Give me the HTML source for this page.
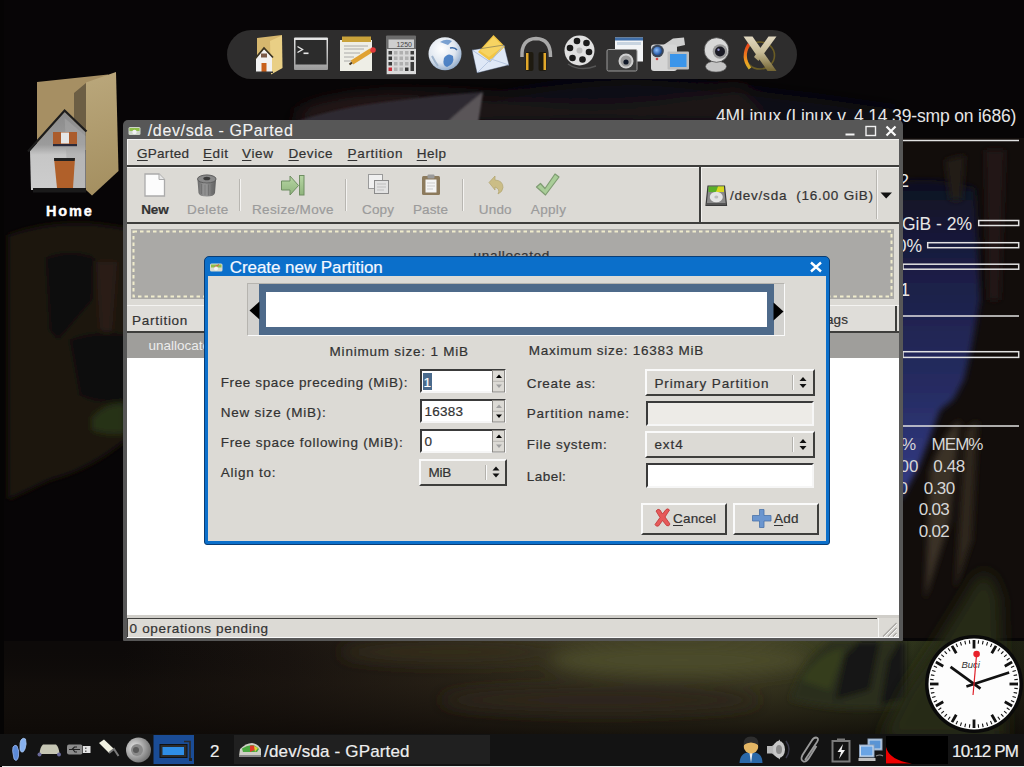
<!DOCTYPE html>
<html><head><meta charset="utf-8">
<style>
*{box-sizing:border-box;margin:0;padding:0}
html,body{width:1024px;height:767px;overflow:hidden;background:#0b0908}
body{position:relative;font-family:"Liberation Sans",sans-serif}
.a{position:absolute}
.t{position:absolute;white-space:nowrap;line-height:1;color:#323232;-webkit-text-stroke:0.2px currentColor}
.u{text-decoration:underline;text-decoration-thickness:1px;text-underline-offset:2px}
svg{position:absolute;overflow:visible}
</style></head><body>
<!--WALL-->
<svg style="left:0;top:0" width="1024" height="767">
<defs>
<filter id="b20" x="-50%" y="-50%" width="200%" height="200%"><feGaussianBlur stdDeviation="18"/></filter>
<filter id="b10" x="-50%" y="-50%" width="200%" height="200%"><feGaussianBlur stdDeviation="8"/></filter>
<filter id="b4" x="-50%" y="-50%" width="200%" height="200%"><feGaussianBlur stdDeviation="3"/></filter>
<filter id="b2" x="-50%" y="-50%" width="200%" height="200%"><feGaussianBlur stdDeviation="1.2"/></filter>
<linearGradient id="sky" gradientUnits="userSpaceOnUse" x1="0" y1="180" x2="0" y2="500"><stop offset="0" stop-color="#0f1020"/><stop offset="0.25" stop-color="#1a1d42"/><stop offset="0.65" stop-color="#262c62"/><stop offset="1" stop-color="#353d88"/></linearGradient>
<linearGradient id="gh" gradientUnits="userSpaceOnUse" x1="0" y1="0" x2="1024" y2="0"><stop offset="0.12" stop-color="#0d0a09"/><stop offset="0.28" stop-color="#1a1410"/><stop offset="0.42" stop-color="#2a2318"/><stop offset="0.58" stop-color="#403d25"/><stop offset="0.74" stop-color="#464528"/><stop offset="0.86" stop-color="#333a1e"/><stop offset="1" stop-color="#1e2012"/></linearGradient>
<linearGradient id="gv" gradientUnits="userSpaceOnUse" x1="0" y1="640" x2="0" y2="736"><stop offset="0" stop-color="#0a0806" stop-opacity="0"/><stop offset="0.45" stop-color="#1a140e" stop-opacity="0.35"/><stop offset="1" stop-color="#0e0a07" stop-opacity="0.85"/></linearGradient>
</defs>
<rect width="1024" height="767" fill="#070506"/>
<g filter="url(#b10)">
<path d="M480 100 Q600 70 700 85 Q800 95 900 110 L900 125 L480 125Z" fill="#0c0c14"/>
<path d="M290 118 Q380 78 520 100 Q640 112 740 85 L770 122 L290 125Z" fill="#1f1517"/>
<path d="M300 110 Q360 88 420 100 L415 118 Q360 105 305 122Z" fill="#2a1a1a"/>

</g>
<g filter="url(#b2)">
<path d="M290 124 Q330 108 400 100 Q440 95 482 92 L478 124Z" fill="#2e2a32"/>
<path d="M445 124 Q462 108 483 92 L478 124Z" fill="#5a5458"/>
</g>
<g filter="url(#b4)">
<path d="M8 235 Q60 215 126 228 L126 440 Q90 470 50 480 L8 500Z" fill="#1a1310"/>
<path d="M46 258 Q70 248 95 258 L92 300 Q75 320 58 340 L50 330Z" fill="#0a0708"/>
<path d="M96 262 L117 262 L112 330 Q105 336 100 328Z" fill="#2a1f17"/>
<path d="M70 340 Q95 330 126 335 L126 400 Q100 405 80 395Z" fill="#0b0808"/>
<path d="M92 418 Q108 400 126 404 L126 433 Q108 436 92 430Z" fill="#283016"/>
</g>
<!-- ground -->
<rect x="0" y="641" width="1024" height="99" fill="url(#gh)"/>
<rect x="0" y="641" width="1024" height="99" fill="url(#gv)"/>
<g filter="url(#b10)">
<ellipse cx="450" cy="652" rx="110" ry="10" fill="#342e1e"/>
<ellipse cx="680" cy="660" rx="130" ry="16" fill="#4c4b2c"/>
<ellipse cx="600" cy="700" rx="160" ry="12" fill="#2e261a"/>
</g>
<g filter="url(#b4)">
<path d="M790 700 Q800 670 815 655 L830 641 L905 641 L905 705 Q850 715 790 700Z" fill="#2a2e1a"/>
<path d="M835 700 L845 655 L860 641 L880 641 L870 690Z" fill="#141412"/>
<path d="M880 705 L888 660 L900 641 L905 641 L905 700Z" fill="#151513"/>
<path d="M800 680 Q820 650 845 648 L830 690Z" fill="#353c1e"/>
</g>
<!-- right side --><!-- right side -->
<rect x="900" y="138" width="124" height="500" fill="#120d0b"/>
<g filter="url(#b4)">
<path d="M898 182 Q935 176 975 188 L980 300 L971 350 L964 380 L953 400 L940 410 L929 440 L917 470 L903 495 L898 500Z" fill="url(#sky)"/>
</g>
<g filter="url(#b4)">
<path d="M930 470 Q945 430 960 420 L950 520 L925 600 Z" fill="#3a3226"/>
<path d="M965 430 L978 420 L972 540 L955 590Z" fill="#2e271e"/>
<path d="M985 150 L1005 150 L1000 300 L988 300Z" fill="#221816"/>
<path d="M945 160 L965 155 L962 200 L950 200Z" fill="#231a18"/>
</g>
<g filter="url(#b10)">
<path d="M880 740 L905 690 Q940 640 975 580 Q990 560 1000 600 L1005 740Z" fill="#262c17"/>
</g>
<rect x="0" y="0" width="4" height="767" fill="#050404"/>
</svg>
<svg style="left:0;top:0" width="1024" height="767">
<g stroke="#e2e2e2" fill="none">
<path d="M903 140.5H1019" stroke-width="1.6"/>
<rect x="978.7" y="220.5" width="40" height="5" stroke-width="1.5"/>
<rect x="927.7" y="242.7" width="91" height="5" stroke-width="1.5"/>
<rect x="903" y="264.2" width="115.7" height="5" stroke-width="1.5"/>
<path d="M903 316H1019" stroke-width="1.6"/>
<rect x="903" y="351.7" width="115.7" height="5.7" stroke-width="1.5"/>
<path d="M903 426H1019" stroke-width="1.6"/>
</g>
</svg>

<div class=t style='left:715.9px;top:107.7px;font-size:17.5px;letter-spacing:-0.15px;color:#e6e6e6;-webkit-text-stroke:0'>4MLinux (Linux v. 4.14.39-smp on i686)</div>
<div class=t style='left:931.5px;top:436.1px;font-size:17px;letter-spacing:-0.93px;color:#d6d6d6;-webkit-text-stroke:0'>MEM%</div>
<div class=t style='left:933.3px;top:458.0px;font-size:17px;letter-spacing:-0.36px;color:#d6d6d6;-webkit-text-stroke:0'>0.48</div>
<div class=t style='left:923.8px;top:479.9px;font-size:17px;letter-spacing:-0.56px;color:#d6d6d6;-webkit-text-stroke:0'>0.30</div>
<div class=t style='left:918.7px;top:501.3px;font-size:17px;letter-spacing:-0.70px;color:#d6d6d6;-webkit-text-stroke:0'>0.03</div>
<div class=t style='left:918.7px;top:522.8px;font-size:17px;letter-spacing:-0.70px;color:#d6d6d6;-webkit-text-stroke:0'>0.02</div>
<div class=t style='left:45.9px;top:203.9px;font-size:14.5px;letter-spacing:1.90px;color:#fff;font-weight:bold;-webkit-text-stroke:0.4px #fff'>Home</div>
<div class=t style='right:115.0px;top:173.2px;font-size:17.5px;letter-spacing:0px;color:#e6e6e6;-webkit-text-stroke:0'>Uptime: 0h 12m 2</div>
<div class=t style='right:52.0px;top:216.2px;font-size:17.5px;letter-spacing:0px;color:#e6e6e6;-webkit-text-stroke:0'>16.00GiB - 2%</div>
<div class=t style='right:102.0px;top:237.8px;font-size:17.5px;letter-spacing:0px;color:#e6e6e6;-webkit-text-stroke:0'>RAM: 10%</div>
<div class=t style='right:114.0px;top:281.6px;font-size:17.5px;letter-spacing:0px;color:#e6e6e6;-webkit-text-stroke:0'>Processes: 121</div>
<div class=t style='right:108.0px;top:436.1px;font-size:17px;letter-spacing:0px;color:#d6d6d6;-webkit-text-stroke:0'>CPU%</div>
<div class=t style='right:105.5px;top:458.0px;font-size:17px;letter-spacing:0px;color:#d6d6d6;-webkit-text-stroke:0'>0.00</div>
<div class=t style='right:116.0px;top:479.9px;font-size:17px;letter-spacing:0px;color:#d6d6d6;-webkit-text-stroke:0'>0.00</div>
<!--DOCK-->
<div class="a" style="left:227px;top:30px;width:570px;height:49px;border-radius:25px;background:#2e2d2d"></div>

<svg style="left:0;top:0" width="1024" height="230">
<defs>
<linearGradient id="silv" x1="0" y1="0" x2="0" y2="1"><stop offset="0" stop-color="#e8e8e8"/><stop offset="1" stop-color="#9a9a9a"/></linearGradient>
<linearGradient id="gold" x1="0" y1="0" x2="1" y2="0"><stop offset="0" stop-color="#e2c77c"/><stop offset="1" stop-color="#c9a858"/></linearGradient>
<radialGradient id="globe" cx="0.4" cy="0.35" r="0.7"><stop offset="0" stop-color="#ffffff"/><stop offset="0.6" stop-color="#dfe6ef"/><stop offset="1" stop-color="#8aa6c8"/></radialGradient>
<radialGradient id="lens" cx="0.4" cy="0.4" r="0.6"><stop offset="0" stop-color="#8fc0ff"/><stop offset="1" stop-color="#1a4c9a"/></radialGradient>
<linearGradient id="tan" x1="0" y1="0" x2="1" y2="1"><stop offset="0" stop-color="#b8a577"/><stop offset="1" stop-color="#9d8a5c"/></linearGradient>
</defs>
<!-- desktop Home icon -->
<linearGradient id="tan2" gradientUnits="userSpaceOnUse" x1="86" y1="80" x2="118" y2="190"><stop offset="0" stop-color="#b9a67a"/><stop offset="1" stop-color="#a48f60"/></linearGradient>
<path d="M37 82 L108 74.5 L108 150 L37 150Z" fill="#a68f63"/>
<path d="M74 93 L86 83 L86 150 L74 150Z" fill="#6c5e44"/>
<path d="M86 82.5 L116 72 L118.5 171 L92 195.5 L86 190Z" fill="url(#tan2)"/>
<linearGradient id="hw" gradientUnits="userSpaceOnUse" x1="0" y1="112" x2="0" y2="190"><stop offset="0" stop-color="#8a8a8a"/><stop offset="0.42" stop-color="#9c9c9c"/><stop offset="0.55" stop-color="#c6c6c6"/><stop offset="1" stop-color="#cdcdcd"/></linearGradient>
<path d="M30 151 L64.6 112 L85.5 132 L85.5 190 L31 190Z" fill="url(#hw)"/>
<path d="M64.6 118 L85.5 136 L85.5 190 L68 190Z" fill="#a8a8a8" opacity="0.55"/>
<path d="M28 151.5 L64.6 110.5 L86.5 131.5" fill="none" stroke="#1c1c1c" stroke-width="2.2"/>
<rect x="53" y="132" width="24" height="12.5" fill="#ab5c2c"/>
<rect x="61" y="132.5" width="8" height="11" fill="#e6e6e6"/>
<rect x="53" y="144" width="24" height="2.2" fill="#2a2a3a"/>
<path d="M54 158 H75 L73 188 H57Z" fill="#b0602a"/>
<path d="M54 158 H75 L74.6 161 H54.2Z" fill="#222"/>
<rect x="33" y="188" width="53" height="4.5" fill="#1a1a1a"/>
<!-- dock: home folder -->
<path d="M257 38 L282 35 L282 68 L257 72Z" fill="#d6b76e"/>
<path d="M270 41 L282 35.5 L282.5 68 L271 74.5Z" fill="#e9cf85"/>
<path d="M256 72 L256 58 L264 49 L272 57 L272 72Z" fill="#f2f2f2"/>
<path d="M254.5 59.5 L264 48 L273 57.5" fill="none" stroke="#3a3322" stroke-width="1.8"/>
<rect x="261.5" y="63" width="5" height="9" fill="#c8601c"/>
<rect x="261" y="53.5" width="6" height="4" fill="#7a5a48"/>
<rect x="255" y="71.5" width="18" height="1.5" fill="#333"/>

<!-- terminal -->
<rect x="294" y="37.5" width="34" height="32.5" rx="1" fill="url(#silv)"/>
<rect x="295.5" y="40" width="31" height="24.5" fill="#2c2c2c"/>
<path d="M297.5 46.5 L302.5 49.5 L297.5 52.5" fill="none" stroke="#e8e8e8" stroke-width="1.4"/>
<rect x="303.5" y="52.5" width="5" height="1.6" fill="#e8e8e8"/>

<!-- notepad -->
<rect x="340" y="40" width="32" height="31" fill="#eeeee6"/>
<rect x="342" y="36.5" width="29" height="5.5" fill="#c9a23a"/>
<g stroke="#9a9a9a" stroke-width="0.8"><path d="M344 46H368M344 49H364M344 53H360M344 57H354M344 61H352"/></g>
<path d="M352 62.5 L371 50.5" stroke="#e0a232" stroke-width="4.5" stroke-linecap="butt"/>
<path d="M352 62.5 L349.5 64.5" stroke="#4a3a20" stroke-width="2"/>
<circle cx="373" cy="50" r="2.8" fill="#e23a3a"/>

<!-- calculator -->
<rect x="386" y="35.5" width="30" height="39" rx="1" fill="#6b6b6b"/>
<rect x="388.5" y="39.5" width="25.5" height="8.5" fill="#cfcfcf"/>
<text x="412" y="47" font-size="7" font-family="Liberation Sans" fill="#444" text-anchor="end">1250</text>
<rect x="387" y="49" width="29" height="25" fill="#d9d9d9"/>
<g fill="#3a3a3a"><rect x="388.5" y="51" width="3.5" height="3.5"/><rect x="388.5" y="56.5" width="3.5" height="3.5"/><rect x="388.5" y="62" width="3.5" height="3.5"/><rect x="410.5" y="51" width="3.5" height="3.5"/><rect x="410.5" y="56.5" width="3.5" height="3.5"/><rect x="410.5" y="62" width="3.5" height="9"/><rect x="405" y="67.5" width="3.5" height="3.5"/></g>
<g fill="#b0b0b0"><rect x="394" y="51" width="3.5" height="3.5"/><rect x="399.5" y="51" width="3.5" height="3.5"/><rect x="405" y="51" width="3.5" height="3.5"/><rect x="394" y="56.5" width="3.5" height="3.5"/><rect x="399.5" y="56.5" width="3.5" height="3.5"/><rect x="405" y="56.5" width="3.5" height="3.5"/><rect x="394" y="62" width="3.5" height="3.5"/><rect x="399.5" y="62" width="3.5" height="3.5"/><rect x="405" y="62" width="3.5" height="3.5"/><rect x="394" y="67.5" width="3.5" height="3.5"/><rect x="399.5" y="67.5" width="3.5" height="3.5"/></g>
<rect x="388.5" y="67.5" width="3.5" height="3.5" fill="#c8303a"/>

<!-- globe -->
<circle cx="445" cy="53.8" r="16.5" fill="url(#globe)"/>
<path d="M444 58 Q448 52 453 56 Q455 64 447 67 Q442 66 444 58Z" fill="#3f78c0" opacity="0.9"/>
<path d="M440 42 Q446 38 452 41 L448 45Z" fill="#4a7fc0" opacity="0.7"/>
<path d="M450 48 Q455 47 457 50" stroke="#3a6aa8" stroke-width="1.5" fill="none"/>
<path d="M432 56 Q435 62 438 66" stroke="#a0b4cc" stroke-width="2" fill="none"/>

<!-- envelope -->
<path d="M472 50 L504 45 L509 65 L477 73Z" fill="#dfe8f6"/>
<path d="M478 52 L493.5 35 L505 46.5 L490 61Z" fill="#f2c544"/>
<path d="M480 51 L493.5 37 L503 46.5 L489 57Z" fill="#f7d462"/>
<path d="M472 50 L490 62 L504 45" fill="none" stroke="#aebfdc" stroke-width="1"/>
<path d="M477 73 L491 59 L509 65" fill="none" stroke="#b8c8e2" stroke-width="1"/>
<path d="M472 50 L504 45 L509 65 L477 73Z" fill="none" stroke="#27344e" stroke-width="0.8" opacity="0.5"/>
<!-- headphones -->
<path d="M522 57 Q521 39 536 38.5 Q551 39 550.5 57" fill="none" stroke="#a8a8a8" stroke-width="3.5"/>
<rect x="525.5" y="52" width="8" height="19" rx="2" fill="#1e1a10"/>
<rect x="538.5" y="52" width="8" height="19" rx="2" fill="#1e1a10"/>
<rect x="526" y="53" width="2.5" height="17" fill="#e2a82a"/>
<rect x="543.5" y="53" width="2.5" height="17" fill="#e2a82a"/>

<!-- film reel -->
<path d="M568 64 Q580 72 596 66" fill="none" stroke="#555" stroke-width="1.5"/>
<circle cx="579.5" cy="50.5" r="15" fill="#e0e0e0"/>
<g fill="#1a1a1a"><circle cx="577" cy="41" r="3.3"/><circle cx="586.5" cy="43" r="3.3"/><circle cx="589" cy="52" r="3.3"/><circle cx="582.5" cy="59.5" r="3.3"/><circle cx="572.5" cy="58" r="3.3"/><circle cx="570" cy="48" r="3.3"/></g>
<circle cx="579.5" cy="50.5" r="3" fill="#bbb"/>

<!-- camera + photo -->
<rect x="615" y="37.5" width="28" height="24" fill="#f2f4f6"/>
<rect x="615" y="37.5" width="28" height="3" fill="#3f6ea8"/>
<rect x="617" y="42" width="24" height="3" fill="#c8d4e0"/>
<rect x="607" y="49.5" width="30" height="21.5" rx="1.5" fill="#3c3c3c" stroke="#9a9a9a" stroke-width="1"/>
<circle cx="626" cy="61" r="7.5" fill="#cfcfcf"/>
<circle cx="626" cy="61" r="5.5" fill="#9a9a9a"/>
<circle cx="626" cy="62" r="2.6" fill="#101828"/>

<!-- camcorder -->
<path d="M662 46 L673 38.5 L684 37.5 L685 45 L676 47Z" fill="#cfcfcf"/>
<rect x="651" y="44.5" width="26" height="26.5" rx="3" fill="#d6d6d6"/>
<circle cx="657.5" cy="51" r="6.3" fill="#3a4658"/>
<circle cx="657.5" cy="51" r="4.3" fill="url(#lens)"/>
<circle cx="657" cy="59" r="1.3" fill="#d04848"/>
<rect x="667.5" y="51.5" width="21.5" height="18" rx="1" fill="#bdbdbd"/>
<rect x="670" y="54" width="16.5" height="13" fill="#3b95ea"/>
<!-- webcam -->
<ellipse cx="716" cy="66.5" rx="10.5" ry="5.5" fill="#c4c4c4" stroke="#555" stroke-width="0.6"/>
<circle cx="716.5" cy="50" r="12.3" fill="#d8d8d8" stroke="#4a4a4a" stroke-width="0.8"/>
<circle cx="720" cy="51.5" r="7.3" fill="#9a9a9a"/>
<circle cx="720" cy="51.5" r="5" fill="#1a1a24"/>
<circle cx="718.5" cy="49.8" r="1.2" fill="#9090c8"/>
<!-- X logo -->
<linearGradient id="xg" gradientUnits="userSpaceOnUse" x1="0" y1="36" x2="0" y2="72"><stop offset="0" stop-color="#e2d9c2"/><stop offset="0.45" stop-color="#c8bc98"/><stop offset="1" stop-color="#6e5f2c"/></linearGradient>
<linearGradient id="og" gradientUnits="userSpaceOnUse" x1="0" y1="44" x2="0" y2="70"><stop offset="0" stop-color="#e8401a"/><stop offset="0.7" stop-color="#f0a020"/><stop offset="1" stop-color="#c8b030"/></linearGradient>
<ellipse cx="760" cy="55.5" rx="14.5" ry="13.5" fill="none" stroke="#6a5c24" stroke-width="1.6"/>
<path d="M749 44 Q741 57 750 68.5" fill="none" stroke="url(#og)" stroke-width="3.2"/>
<path d="M743.5 36.5 L752.5 36.5 L776.5 71 L767.5 71Z" fill="url(#xg)"/>
<path d="M776.5 36.5 L768.5 36.5 L754 57 L758.5 61Z" fill="url(#xg)"/>
</svg>

<!--WINDOW-->
<div class="a" style="left:123px;top:120px;width:780px;height:521px;background:#575757;border-radius:5px 5px 1px 1px"></div>
<div class="a" style="left:127px;top:139px;width:772px;height:499px;background:#dcdad5"></div>
<!-- menubar highlight -->
<div class="a" style="left:127px;top:139px;width:772px;height:1px;background:#f4f3f1"></div>
<div class="a" style="left:127px;top:139px;width:1px;height:26px;background:#f4f3f1"></div>
<div class="a" style="left:127px;top:165px;width:772px;height:2px;background:#3e3e3c"></div>
<div class="a" style="left:127px;top:167px;width:772px;height:1px;background:#f4f3f1"></div>
<!-- toolbar bottom -->
<div class="a" style="left:127px;top:222px;width:772px;height:2px;background:#3e3e3c"></div>
<div class="a" style="left:699px;top:167px;width:2px;height:56px;background:#3e3e3c"></div>
<div class="a" style="left:701px;top:168px;width:1px;height:54px;background:#f4f3f1"></div>
<!-- toolbar separators -->
<div class="a" style="left:239px;top:179px;width:1px;height:32px;background:#b8b6b1"></div>
<div class="a" style="left:240px;top:179px;width:1px;height:32px;background:#f4f3f1"></div>
<div class="a" style="left:345px;top:179px;width:1px;height:32px;background:#b8b6b1"></div>
<div class="a" style="left:346px;top:179px;width:1px;height:32px;background:#f4f3f1"></div>
<div class="a" style="left:462px;top:179px;width:1px;height:32px;background:#b8b6b1"></div>
<div class="a" style="left:463px;top:179px;width:1px;height:32px;background:#f4f3f1"></div>
<!-- combo separator -->
<div class="a" style="left:876px;top:170px;width:1px;height:49px;background:#b8b6b1"></div>
<div class="a" style="left:877px;top:170px;width:1px;height:49px;background:#f4f3f1"></div>
<svg style="left:880px;top:192px" width="13" height="7"><path d="M0.5 0.5H12L6.2 6.5Z" fill="#111"/></svg>
<!-- partition map -->
<div class="a" style="left:131px;top:229px;width:763px;height:70px;background:#aaa9a6"></div>
<svg style="left:131px;top:229px" width="763" height="70"><rect x="2.5" y="2.5" width="758" height="65" fill="none" stroke="#efeccc" stroke-width="2" stroke-dasharray="3.5 3"/></svg>
<!-- list header -->
<div class="a" style="left:127px;top:305px;width:772px;height:1px;background:#f4f3f1"></div>
<div class="a" style="left:127px;top:306px;width:772px;height:25px;background:#dfddd9"></div>
<div class="a" style="left:127px;top:331px;width:772px;height:2px;background:#3e3e3c"></div>
<div class="a" style="left:895px;top:306px;width:2px;height:26px;background:#3e3e3c"></div>
<!-- row -->
<div class="a" style="left:127px;top:333px;width:772px;height:25px;background:#9f9e9b"></div>
<!-- list white -->
<div class="a" style="left:127px;top:358px;width:772px;height:257px;background:#ffffff"></div>
<!-- status -->
<div class="a" style="left:127px;top:615px;width:772px;height:3px;background:#d0cec9"></div>
<div class="a" style="left:127px;top:618px;width:750px;height:1px;background:#3e3e3c"></div>
<div class="a" style="left:127px;top:618px;width:1px;height:19px;background:#3e3e3c"></div>
<div class="a" style="left:127px;top:637px;width:772px;height:1px;background:#f8f8f8"></div>
<div class="a" style="left:878px;top:618px;width:1px;height:19px;background:#f6f6f4"></div>
<svg style="left:880px;top:620px" width="18" height="18"><path d="M16.5 3L3 16.5M16.5 8L8 16.5M16.5 13L13 16.5" stroke="#a9a7a2" stroke-width="1.3"/><path d="M17 4L4 17M17 9L9 17M17 14L14 17" stroke="#fafafa" stroke-width="0.8"/></svg>
<!-- title buttons -->
<svg style="left:844px;top:125px" width="54" height="13">
<path d="M1.5 9.5H10.5" stroke="#f4f4f4" stroke-width="2"/>
<rect x="22" y="1.5" width="9.5" height="9" fill="none" stroke="#f0f0f0" stroke-width="1.4"/>
<path d="M42.5 1.5L51.5 10.5M51.5 1.5L42.5 10.5" stroke="#fafafa" stroke-width="2.2"/>
</svg>

<svg style="left:0;top:0" width="1024" height="560">
<defs>
<linearGradient id="grn" x1="0" y1="0" x2="0" y2="1"><stop offset="0" stop-color="#b7d6a4"/><stop offset="1" stop-color="#8fb47c"/></linearGradient>
<linearGradient id="trash" x1="0" y1="0" x2="1" y2="0"><stop offset="0" stop-color="#6a6a6a"/><stop offset="0.4" stop-color="#9a9a9a"/><stop offset="1" stop-color="#5e5e5e"/></linearGradient>
</defs>
<!-- window title icon -->
<rect x="128.5" y="127" width="12" height="8" rx="1.5" fill="#cfd6c8"/>
<rect x="129.5" y="128" width="10" height="3" fill="#8fbf4a"/>
<circle cx="134.5" cy="132" r="2.2" fill="#f2f2f2"/>
<!-- New -->
<path d="M145 174 H159 L164.5 179.5 V196 H145Z" fill="#fcfcfc" stroke="#ababab" stroke-width="1.3"/>
<path d="M159 174 V179.5 H164.5" fill="#e8e8e8" stroke="#ababab" stroke-width="1"/>
<!-- Delete -->
<path d="M197.5 180 Q197 175 206.8 174.5 Q216.5 175 216 180 L215 193 Q214 196.5 206.8 196.5 Q199.5 196.5 198.5 193Z" fill="url(#trash)"/>
<ellipse cx="206.8" cy="179" rx="9.3" ry="4" fill="#8a8a8a" stroke="#555" stroke-width="0.8"/>
<ellipse cx="206.8" cy="178.5" rx="3.5" ry="1.8" fill="#3a3a3a"/>
<g stroke="#6a6a6a" stroke-width="0.7"><path d="M201.5 184V194M205 184.5V195.5M208.5 184.5V195.5M212 184V194"/></g>
<!-- Resize/Move -->
<path d="M281.5 181 H290 V176 L298.5 185.5 L290 195 V190 H281.5Z" fill="url(#grn)" stroke="#6f8e62" stroke-width="1"/>
<rect x="299.5" y="175.5" width="4.5" height="19.5" fill="url(#grn)" stroke="#6f8e62" stroke-width="1"/>
<!-- Copy -->
<rect x="368.5" y="174.5" width="14" height="14" fill="#f0f0f0" stroke="#9a9a9a" stroke-width="1"/>
<rect x="374.5" y="180.5" width="14" height="13" fill="#e2e2e2" stroke="#8a8a8a" stroke-width="1"/>
<g stroke="#b0b0b0" stroke-width="0.7"><path d="M377 184H386M377 187H386M377 190H384"/></g>
<!-- Paste -->
<rect x="422" y="176" width="18" height="19" rx="1.5" fill="#8c7a5c"/>
<rect x="425.5" y="179.5" width="11" height="13" fill="#f4f4f4"/>
<rect x="427.5" y="174.5" width="7" height="4" rx="1" fill="#9a9a9a"/>
<g stroke="#bbb" stroke-width="0.7"><path d="M427 183H435M427 186H435M427 189H433"/></g>
<!-- Undo -->
<path d="M489 182.5 L495 176 V180 Q503 180.5 503 187.5 Q502.5 192 498 194 Q500.5 189 495 187 V190Z" fill="#cbbd86" stroke="#b0a46e" stroke-width="0.7"/>
<!-- Apply -->
<path d="M536.5 187 L540.5 183.5 L545 188.5 L555 174 L559 177 L545.5 195Z" fill="#a9cd98" stroke="#7f9c72" stroke-width="1.2" stroke-linejoin="round"/>
<!-- HDD in combo -->
<path d="M708 186 H724.5 L726.5 205.5 H706Z" fill="#8a8a8a" stroke="#3a3a3a" stroke-width="1.2"/>
<rect x="708.5" y="186.5" width="15.5" height="5.5" fill="#5ab02a"/>
<path d="M718 186.5 L724 186.5 L724 192 L716 192Z" fill="#d8d820"/>
<ellipse cx="716.3" cy="197" rx="6.5" ry="5.3" fill="#e4e4e4"/>
<ellipse cx="716.3" cy="197" rx="2" ry="1.5" fill="#bbb"/>
<rect x="707" y="203" width="19" height="2" fill="#555"/>
</svg>

<div class=t style='left:147.8px;top:123.0px;font-size:16px;letter-spacing:0.63px;color:#f2f2f2;-webkit-text-stroke:0.1px #f2f2f2'>/dev/sda - GParted</div>
<div class=t style='left:137.0px;top:147.4px;font-size:13.5px;letter-spacing:0.28px;color:#323232;'><span class=u>G</span>Parted</div>
<div class=t style='left:203.0px;top:147.4px;font-size:13.5px;letter-spacing:0.57px;color:#323232;'><span class=u>E</span>dit</div>
<div class=t style='left:242.0px;top:147.4px;font-size:13.5px;letter-spacing:0.66px;color:#323232;'><span class=u>V</span>iew</div>
<div class=t style='left:288.4px;top:147.4px;font-size:13.5px;letter-spacing:0.59px;color:#323232;'><span class=u>D</span>evice</div>
<div class=t style='left:347.6px;top:147.4px;font-size:13.5px;letter-spacing:0.66px;color:#323232;'><span class=u>P</span>artition</div>
<div class=t style='left:416.7px;top:147.4px;font-size:13.5px;letter-spacing:0.51px;color:#323232;'><span class=u>H</span>elp</div>
<div class=t style='left:141.2px;top:202.6px;font-size:13.5px;letter-spacing:-0.13px;color:#333;font-weight:bold'>New</div>
<div class=t style='left:187.0px;top:202.6px;font-size:13.5px;letter-spacing:0.47px;color:#9b9b9b;'>Delete</div>
<div class=t style='left:252.0px;top:202.6px;font-size:13.5px;letter-spacing:0.36px;color:#9b9b9b;'>Resize/Move</div>
<div class=t style='left:362.0px;top:202.6px;font-size:13.5px;letter-spacing:0.16px;color:#9b9b9b;'>Copy</div>
<div class=t style='left:413.0px;top:202.6px;font-size:13.5px;letter-spacing:0.12px;color:#9b9b9b;'>Paste</div>
<div class=t style='left:478.8px;top:202.6px;font-size:13.5px;letter-spacing:0.17px;color:#9b9b9b;'>Undo</div>
<div class=t style='left:530.8px;top:202.6px;font-size:13.5px;letter-spacing:0.35px;color:#9b9b9b;'>Apply</div>
<div class=t style='left:730.0px;top:188.6px;font-size:13.5px;letter-spacing:0.77px;color:#333;'>/dev/sda&nbsp; (16.00 GiB)</div>
<div class=t style='left:132.0px;top:313.7px;font-size:13.5px;letter-spacing:0.73px;color:#323232;'>Partition</div>
<div class=t style='left:148.5px;top:338.9px;font-size:13.5px;letter-spacing:0.00px;color:#ececec;-webkit-text-stroke:0'>unallocated</div>
<div class=t style='left:826.0px;top:313.1px;font-size:13.5px;letter-spacing:0.11px;color:#323232;'>ags</div>
<div class=t style='left:473.6px;top:249.2px;font-size:13.5px;letter-spacing:0.67px;color:#333;'>unallocated</div>
<div class=t style='left:129.6px;top:621.6px;font-size:13.5px;letter-spacing:0.65px;color:#323232;'>0 operations pending</div>
<!--DIALOG-->
<div class="a" style="left:204px;top:256px;width:626px;height:289px;background:#0b6fca;border:1px solid #0a3d74;border-radius:5px 5px 3px 3px"></div>
<div class="a" style="left:208px;top:276px;width:618px;height:265px;background:#dcdad5"></div>
<svg style="left:809px;top:261px" width="14" height="12"><path d="M2 1.5L12 10.5M12 1.5L2 10.5" stroke="#fff" stroke-width="2.4"/></svg>
<!-- partition widget -->
<div class="a" style="left:247px;top:283px;width:538px;height:53px;background:#d2d1ce;border:1px solid;border-color:#b6b4af #fafafa #fafafa #b6b4af"></div>
<div class="a" style="left:259px;top:284px;width:515px;height:51px;background:#4e6a8a"></div>
<div class="a" style="left:266px;top:292px;width:501px;height:35px;background:#fff"></div>
<svg style="left:249px;top:301px" width="11" height="19"><path d="M0.5 9.5L10.5 0.5V18.5Z" fill="#000"/></svg>
<svg style="left:773px;top:302px" width="11" height="19"><path d="M0.5 0.5L10.5 9.5L0.5 18.5Z" fill="#000"/></svg>
<!-- spin boxes -->
<div class="a" style="left:420px;top:369px;width:86px;height:24px;background:#fff;border:2px solid;border-color:#3a3a3a #f6f6f6 #f6f6f6 #3a3a3a"></div>
<div class="a" style="left:420px;top:399px;width:86px;height:24px;background:#fff;border:2px solid;border-color:#3a3a3a #f6f6f6 #f6f6f6 #3a3a3a"></div>
<div class="a" style="left:420px;top:429px;width:86px;height:24px;background:#fff;border:2px solid;border-color:#3a3a3a #f6f6f6 #f6f6f6 #3a3a3a"></div>
<!--SPINBTNS-->
<!-- align combo -->
<div class="a" style="left:419px;top:459px;width:88px;height:27px;background:#dcdad5;border:2px solid;border-color:#fafafa #3e3e3c #3e3e3c #fafafa"></div>
<div class="a" style="left:485px;top:465px;width:1px;height:15px;background:#b3b1ac"></div>
<div class="a" style="left:486px;top:465px;width:1px;height:15px;background:#fafafa"></div>
<!-- right combos -->
<div class="a" style="left:645px;top:369px;width:170px;height:27px;background:#dcdad5;border:2px solid;border-color:#fafafa #3e3e3c #3e3e3c #fafafa"></div>
<div class="a" style="left:792px;top:375px;width:1px;height:15px;background:#b3b1ac"></div>
<div class="a" style="left:793px;top:375px;width:1px;height:15px;background:#fafafa"></div>
<div class="a" style="left:646px;top:401px;width:168px;height:25px;background:#edebe7;border:2px solid;border-color:#3a3a3a #f6f6f6 #f6f6f6 #3a3a3a"></div>
<div class="a" style="left:645px;top:431px;width:170px;height:27px;background:#dcdad5;border:2px solid;border-color:#fafafa #3e3e3c #3e3e3c #fafafa"></div>
<div class="a" style="left:792px;top:437px;width:1px;height:15px;background:#b3b1ac"></div>
<div class="a" style="left:793px;top:437px;width:1px;height:15px;background:#fafafa"></div>
<div class="a" style="left:646px;top:463px;width:168px;height:25px;background:#fff;border:2px solid;border-color:#3a3a3a #f6f6f6 #f6f6f6 #3a3a3a"></div>
<!--COMBOARROWS-->
<!-- buttons -->
<div class="a" style="left:641px;top:503px;width:86px;height:32px;background:#dcdad5;border:2px solid;border-color:#fafafa #3e3e3c #3e3e3c #fafafa"></div>
<div class="a" style="left:733px;top:503px;width:86px;height:32px;background:#dcdad5;border:2px solid;border-color:#fafafa #3e3e3c #3e3e3c #fafafa"></div>
<!-- selected 1 -->
<div class="a" style="left:423px;top:373px;width:9px;height:17px;background:#4a6a8c"></div>
<div class="t" style="left:423.5px;top:376px;font-size:13.5px;color:#fff">1</div>

<svg style="left:0;top:0" width="1024" height="560">
<!-- dialog title icon -->
<rect x="210" y="263.5" width="12.5" height="8" rx="1.5" fill="#d8dcd0"/>
<rect x="211" y="264.5" width="10.5" height="3" fill="#8fbf4a"/>
<path d="M214 267.5 L219 264.5" stroke="#e05050" stroke-width="1"/>
<circle cx="216" cy="268.5" r="2" fill="#f4f4f4"/>
<!-- spin buttons -->
<g>
<rect x="492.5" y="370.5" width="12" height="21.5" fill="#dcdad5" stroke="#8a8884" stroke-width="1"/>
<rect x="492.5" y="400.5" width="12" height="21.5" fill="#dcdad5" stroke="#8a8884" stroke-width="1"/>
<rect x="492.5" y="430.5" width="12" height="21.5" fill="#dcdad5" stroke="#8a8884" stroke-width="1"/>
<path d="M493 381.3H504M493 411.3H504M493 441.3H504" stroke="#b8b6b1" stroke-width="1"/>
<path d="M496 378H502L499 374.5Z" fill="#000"/>
<path d="M496 384.5H502L499 388Z" fill="#a0a0a0"/>
<path d="M496 408H502L499 404.5Z" fill="#a0a0a0"/>
<path d="M496 414.5H502L499 418Z" fill="#000"/>
<path d="M496 438H502L499 434.5Z" fill="#000"/>
<path d="M496 444.5H502L499 448Z" fill="#a0a0a0"/>
</g>
<!-- combo double arrows -->
<g fill="#111">
<path d="M492.5 470.5H499.5L496 466.5Z"/><path d="M492.5 473.5H499.5L496 477.5Z"/>
<path d="M799.5 381H806.5L803 377Z"/><path d="M799.5 384H806.5L803 388Z"/>
<path d="M799.5 443H806.5L803 439Z"/><path d="M799.5 446H806.5L803 450Z"/>
</g>
<!-- cancel X -->
<path d="M656 511 Q658 508 660 510 L662.5 514 L666 509.5 Q668 508 669.5 510 L665 517 L670 524 Q669 527 666.5 525.5 L662.5 520.5 L658.5 526 Q656 527 655 524.5 L660 517.5Z" fill="#e65a5a" stroke="#c03434" stroke-width="0.8"/>
<!-- add plus -->
<path d="M759.5 509.5 H764 V515.5 H771 V521 H764 V527.5 H759.5 V521 H752.5 V515.5 H759.5Z" fill="#6b96cf" stroke="#4a72a8" stroke-width="0.8"/>
</svg>

<div class=t style='left:229.7px;top:259.0px;font-size:17px;letter-spacing:-0.05px;color:#f4f8ff;'>Create new Partition</div>
<div class=t style='left:329.6px;top:344.7px;font-size:13.5px;letter-spacing:0.77px;color:#323232;'>Minimum size: 1 MiB</div>
<div class=t style='left:528.7px;top:344.4px;font-size:13.5px;letter-spacing:0.74px;color:#323232;'>Maximum size: 16383 MiB</div>
<div class=t style='left:220.7px;top:375.9px;font-size:13.5px;letter-spacing:0.63px;color:#323232;'>Free space preceding (MiB):</div>
<div class=t style='left:220.7px;top:405.5px;font-size:13.5px;letter-spacing:0.76px;color:#323232;'>New size (MiB):</div>
<div class=t style='left:220.7px;top:435.5px;font-size:13.5px;letter-spacing:0.71px;color:#323232;'>Free space following (MiB):</div>
<div class=t style='left:220.7px;top:466.2px;font-size:13.5px;letter-spacing:0.76px;color:#323232;'>Align to:</div>
<div class=t style='left:526.7px;top:376.5px;font-size:13.5px;letter-spacing:0.71px;color:#323232;'>Create as:</div>
<div class=t style='left:526.7px;top:407.4px;font-size:13.5px;letter-spacing:0.83px;color:#323232;'>Partition name:</div>
<div class=t style='left:526.7px;top:438.3px;font-size:13.5px;letter-spacing:0.74px;color:#323232;'>File system:</div>
<div class=t style='left:526.7px;top:469.5px;font-size:13.5px;letter-spacing:0.48px;color:#323232;'>Label:</div>
<div class=t style='left:424.4px;top:405.4px;font-size:13.5px;letter-spacing:0.26px;color:#323232;'>16383</div>
<div class=t style='left:424.4px;top:435.0px;font-size:13.5px;letter-spacing:0.00px;color:#323232;'>0</div>
<div class=t style='left:428.4px;top:466.0px;font-size:13.5px;letter-spacing:-0.22px;color:#323232;'>MiB</div>
<div class=t style='left:654.4px;top:377.1px;font-size:13.5px;letter-spacing:0.89px;color:#323232;'>Primary Partition</div>
<div class=t style='left:654.4px;top:438.3px;font-size:13.5px;letter-spacing:0.92px;color:#323232;'>ext4</div>
<div class=t style='left:673.0px;top:512.2px;font-size:13.5px;letter-spacing:0.19px;color:#323232;'><span class=u>C</span>ancel</div>
<div class=t style='left:774.0px;top:512.2px;font-size:13.5px;letter-spacing:0.18px;color:#323232;'><span class=u>A</span>dd</div>
<!--ICONS-->

<svg style="left:0;top:0" width="1024" height="767">
<circle cx="974" cy="684" r="49" fill="#0a0a0a"/>
<circle cx="974" cy="684" r="45.5" fill="#fdfdfd"/>
<path d="M974.00 648.50L974.00 640.00" stroke="#111" stroke-width="2.8"/>
<path d="M978.23 643.72L978.60 640.24" stroke="#111" stroke-width="1.1"/>
<path d="M982.42 644.39L983.15 640.96" stroke="#111" stroke-width="1.1"/>
<path d="M986.52 645.48L987.60 642.15" stroke="#111" stroke-width="1.1"/>
<path d="M990.47 647.00L991.90 643.80" stroke="#111" stroke-width="1.1"/>
<path d="M991.75 653.26L996.00 645.89" stroke="#111" stroke-width="2.8"/>
<path d="M997.81 651.23L999.86 648.40" stroke="#111" stroke-width="1.1"/>
<path d="M1001.10 653.90L1003.44 651.30" stroke="#111" stroke-width="1.1"/>
<path d="M1004.10 656.90L1006.70 654.56" stroke="#111" stroke-width="1.1"/>
<path d="M1006.77 660.19L1009.60 658.14" stroke="#111" stroke-width="1.1"/>
<path d="M1004.74 666.25L1012.11 662.00" stroke="#111" stroke-width="2.8"/>
<path d="M1011.00 667.53L1014.20 666.10" stroke="#111" stroke-width="1.1"/>
<path d="M1012.52 671.48L1015.85 670.40" stroke="#111" stroke-width="1.1"/>
<path d="M1013.61 675.58L1017.04 674.85" stroke="#111" stroke-width="1.1"/>
<path d="M1014.28 679.77L1017.76 679.40" stroke="#111" stroke-width="1.1"/>
<path d="M1009.50 684.00L1018.00 684.00" stroke="#111" stroke-width="2.8"/>
<path d="M1014.28 688.23L1017.76 688.60" stroke="#111" stroke-width="1.1"/>
<path d="M1013.61 692.42L1017.04 693.15" stroke="#111" stroke-width="1.1"/>
<path d="M1012.52 696.52L1015.85 697.60" stroke="#111" stroke-width="1.1"/>
<path d="M1011.00 700.47L1014.20 701.90" stroke="#111" stroke-width="1.1"/>
<path d="M1004.74 701.75L1012.11 706.00" stroke="#111" stroke-width="2.8"/>
<path d="M1006.77 707.81L1009.60 709.86" stroke="#111" stroke-width="1.1"/>
<path d="M1004.10 711.10L1006.70 713.44" stroke="#111" stroke-width="1.1"/>
<path d="M1001.10 714.10L1003.44 716.70" stroke="#111" stroke-width="1.1"/>
<path d="M997.81 716.77L999.86 719.60" stroke="#111" stroke-width="1.1"/>
<path d="M991.75 714.74L996.00 722.11" stroke="#111" stroke-width="2.8"/>
<path d="M990.47 721.00L991.90 724.20" stroke="#111" stroke-width="1.1"/>
<path d="M986.52 722.52L987.60 725.85" stroke="#111" stroke-width="1.1"/>
<path d="M982.42 723.61L983.15 727.04" stroke="#111" stroke-width="1.1"/>
<path d="M978.23 724.28L978.60 727.76" stroke="#111" stroke-width="1.1"/>
<path d="M974.00 719.50L974.00 728.00" stroke="#111" stroke-width="2.8"/>
<path d="M969.77 724.28L969.40 727.76" stroke="#111" stroke-width="1.1"/>
<path d="M965.58 723.61L964.85 727.04" stroke="#111" stroke-width="1.1"/>
<path d="M961.48 722.52L960.40 725.85" stroke="#111" stroke-width="1.1"/>
<path d="M957.53 721.00L956.10 724.20" stroke="#111" stroke-width="1.1"/>
<path d="M956.25 714.74L952.00 722.11" stroke="#111" stroke-width="2.8"/>
<path d="M950.19 716.77L948.14 719.60" stroke="#111" stroke-width="1.1"/>
<path d="M946.90 714.10L944.56 716.70" stroke="#111" stroke-width="1.1"/>
<path d="M943.90 711.10L941.30 713.44" stroke="#111" stroke-width="1.1"/>
<path d="M941.23 707.81L938.40 709.86" stroke="#111" stroke-width="1.1"/>
<path d="M943.26 701.75L935.89 706.00" stroke="#111" stroke-width="2.8"/>
<path d="M937.00 700.47L933.80 701.90" stroke="#111" stroke-width="1.1"/>
<path d="M935.48 696.52L932.15 697.60" stroke="#111" stroke-width="1.1"/>
<path d="M934.39 692.42L930.96 693.15" stroke="#111" stroke-width="1.1"/>
<path d="M933.72 688.23L930.24 688.60" stroke="#111" stroke-width="1.1"/>
<path d="M938.50 684.00L930.00 684.00" stroke="#111" stroke-width="2.8"/>
<path d="M933.72 679.77L930.24 679.40" stroke="#111" stroke-width="1.1"/>
<path d="M934.39 675.58L930.96 674.85" stroke="#111" stroke-width="1.1"/>
<path d="M935.48 671.48L932.15 670.40" stroke="#111" stroke-width="1.1"/>
<path d="M937.00 667.53L933.80 666.10" stroke="#111" stroke-width="1.1"/>
<path d="M943.26 666.25L935.89 662.00" stroke="#111" stroke-width="2.8"/>
<path d="M941.23 660.19L938.40 658.14" stroke="#111" stroke-width="1.1"/>
<path d="M943.90 656.90L941.30 654.56" stroke="#111" stroke-width="1.1"/>
<path d="M946.90 653.90L944.56 651.30" stroke="#111" stroke-width="1.1"/>
<path d="M950.19 651.23L948.14 648.40" stroke="#111" stroke-width="1.1"/>
<path d="M956.25 653.26L952.00 645.89" stroke="#111" stroke-width="2.8"/>
<path d="M957.53 647.00L956.10 643.80" stroke="#111" stroke-width="1.1"/>
<path d="M961.48 645.48L960.40 642.15" stroke="#111" stroke-width="1.1"/>
<path d="M965.58 644.39L964.85 640.96" stroke="#111" stroke-width="1.1"/>
<path d="M969.77 643.72L969.40 640.24" stroke="#111" stroke-width="1.1"/>
<text x="961.5" y="668" font-family="Liberation Sans" font-style="italic" font-size="9.5" fill="#333">Buci</text>
<path d="M980.47 688.70L950.54 666.95" stroke="#111" stroke-width="2.8"/>
<path d="M966.39 686.47L1009.19 672.57" stroke="#111" stroke-width="2.6"/>
<path d="M973.04 694.96L976.61 654.11" stroke="#e0202a" stroke-width="1.2"/>
<circle cx="976.61" cy="654.11" r="3.3" fill="#e8202a"/>
</svg>
<!--TASKBAR-->
<div class="a" style="left:0;top:734px;width:1024px;height:32px;background:#131313"></div>
<div class="a" style="left:2px;top:765.5px;width:1022px;height:1.5px;background:#e8e8e8"></div>
<div class="a" style="left:234px;top:735px;width:256px;height:29px;background:#202020"></div>
<div class="a" style="left:886px;top:736px;width:62px;height:28px;background:#000"></div>
<svg style="left:886px;top:740px" width="30" height="24"><path d="M0 7Q3 20 26 23.5H0Z" fill="#e00"/></svg>
<div class=t style='left:209.9px;top:742.9px;font-size:17px;letter-spacing:0.00px;color:#eee;'>2</div>
<div class=t style='left:264.0px;top:742.9px;font-size:17px;letter-spacing:0.17px;color:#eee;'>/dev/sda - GParted</div>
<div class=t style='left:952.0px;top:742.9px;font-size:17px;letter-spacing:-0.82px;color:#eee;'>10:12 PM</div>
<svg style="left:0;top:0" width="1024" height="767">
<defs>
<radialGradient id="spk" cx="0.35" cy="0.4" r="0.7"><stop offset="0" stop-color="#e8e8e8"/><stop offset="1" stop-color="#6a6a6a"/></radialGradient>
</defs>
<!-- active launcher bg -->
<rect x="153.5" y="735" width="40.5" height="29" fill="#1a4c96"/>
<rect x="160" y="744.5" width="27" height="13" fill="#2c2c2c" stroke="#111" stroke-width="1"/>
<rect x="162.5" y="747" width="21.5" height="8" fill="#2f8ee6"/>
<path d="M184 741.5H190V760" stroke="#2a2a2a" stroke-width="1.6" fill="none"/>
<rect x="189" y="758" width="3" height="3" fill="#222"/>
<!-- feet -->
<path d="M13 747 Q15 744 17 746 Q19.5 751 18.5 756 Q18 760 16 760.5 Q13.5 760 13.5 756 Q12 751 13 747Z" fill="#5b8ad8" stroke="#9ab8f0" stroke-width="0.8"/>
<path d="M21 740 Q23 737 25.5 739 Q27 744 25 749 Q23.5 753 21.5 752 Q19.5 751 20 747 Q19.5 743 21 740Z" fill="#86b0ee" stroke="#a8c8f4" stroke-width="0.8"/>
<!-- drive -->
<path d="M39.5 754 Q40 747 43 744.5 L56 744.5 Q59 747 59.5 754Z" fill="#c6c6b4"/>
<circle cx="39.5" cy="754.5" r="2" fill="#6a6a9a"/>
<circle cx="59" cy="754.5" r="2" fill="#6a6a9a"/>
<!-- usb -->
<rect x="67" y="744.5" width="15.5" height="10" rx="2" fill="#8c8c8c"/>
<path d="M69 749.5H80M72 749.5L74.5 747H77M73 749.5L75 752H77" stroke="#222" stroke-width="1.2" fill="none"/>
<rect x="83" y="746" width="7.5" height="7" fill="#e2e2e2"/>
<rect x="85" y="747.5" width="1.5" height="1.5" fill="#666"/><rect x="85" y="750.5" width="1.5" height="1.5" fill="#666"/>
<!-- pen -->
<path d="M99 743 L104 739.5 L114 749 L109 753Z" fill="#f0f0e0"/>
<path d="M109 753 L114 749 L118.5 756" stroke="#7a7a7a" stroke-width="2" fill="none"/>
<!-- speaker left -->
<circle cx="138.5" cy="750" r="12.5" fill="url(#spk)"/>
<circle cx="137" cy="750" r="6" fill="#8a8a8a"/>
<circle cx="136" cy="750" r="3" fill="#5a5a5a"/>
<!-- taskbar gparted icon -->
<path d="M240 749 Q246 743 252 743 Q258 744 261 749 L261 756 H239Z" fill="#cfcfc6"/>
<path d="M242 748.5 Q247 745 252 745 Q257 746 259 749 L257 752 L243 752Z" fill="#4aa840"/>
<path d="M250 745.5 L254 745.5 L257 749 L250 752Z" fill="#e03a2a"/>
<path d="M254 746 L258 748 L255 752Z" fill="#e0d030"/>
<rect x="239" y="755" width="22" height="2" fill="#888"/>
<!-- user -->
<path d="M739.5 763 Q740 752 751 752 Q762.5 752 762.5 763Z" fill="#2a68a8"/>
<path d="M749.5 753 L751 763 L752.5 753Z" fill="#f0f0f0"/>
<ellipse cx="751" cy="747" rx="7.2" ry="6.5" fill="#e4b664"/>
<path d="M743.5 745 Q743 736.5 751 736.5 Q759 736.5 758.5 745 Q751 740 743.5 745Z" fill="#2e2e2e"/>
<!-- tray speaker -->
<path d="M767 746 H772 L780 739.5 V759.5 L772 753.5 H767Z" fill="#b8b8b8"/>
<ellipse cx="779" cy="749.5" rx="6" ry="8.5" fill="#c8c8c8"/>
<ellipse cx="779" cy="749.5" rx="3" ry="4.5" fill="#8a8a8a"/>
<path d="M786 741 Q792 749.5 786 758" stroke="#3a3a4a" stroke-width="1.5" fill="none"/>
<!-- paperclip -->
<path d="M805 760 L817 742 Q819.5 738 816 737.5 Q813.5 737.5 811.5 741 L802.5 755 Q800 760 803.5 761.5 Q806.5 762 809 758 L816.5 746" stroke="#9a9a9a" stroke-width="1.8" fill="none"/>
<!-- battery -->
<rect x="832.5" y="741" width="17" height="20.5" fill="none" stroke="#7a7a7a" stroke-width="2"/>
<rect x="837" y="738.5" width="8" height="3" fill="#7a7a7a"/>
<path d="M843 744 L837.5 752 H841 L839 759 L845 750 H841.5Z" fill="#f0f0f0"/>
<!-- network -->
<rect x="868" y="739" width="14" height="11" fill="#c8d8ea" stroke="#8aa0bc" stroke-width="1"/>
<rect x="869.5" y="740.5" width="11" height="8" fill="#5a94d4"/>
<rect x="859.5" y="745" width="14.5" height="12" fill="#d0dff0" stroke="#8aa0bc" stroke-width="1"/>
<rect x="861" y="746.5" width="11.5" height="9" fill="#6aa4e4"/>
<rect x="858.5" y="758" width="17" height="3" fill="#c0c0c0"/>
<path d="M876 756 Q880 754 883 756" stroke="#8a8a8a" stroke-width="1.2" fill="none"/>
</svg>

</body></html>
